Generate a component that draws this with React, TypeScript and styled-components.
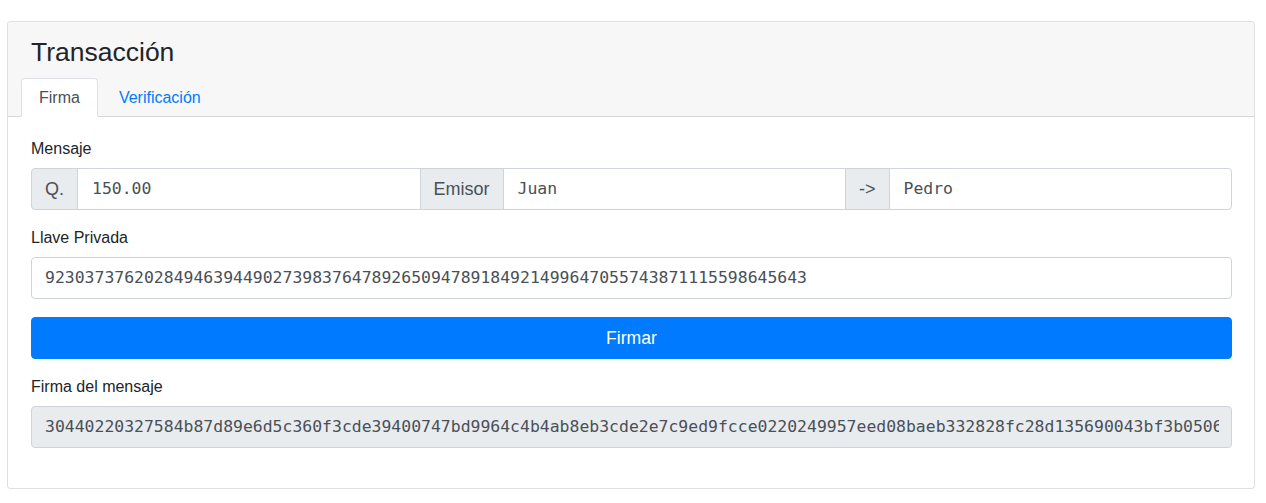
import React from "react";
import styled, { createGlobalStyle } from "styled-components";

const GlobalStyle = createGlobalStyle`
  html, body { margin: 0; padding: 0; background: #fff; }
  body { font-family: "Liberation Sans", Arial, sans-serif; color: #212529; font-size: 16px; line-height: 1.5; }
  * { box-sizing: border-box; }
`;

const Page = styled.div`
  padding: 21px 11px 0 7px;
`;

const Card = styled.div`
  width: 1248px;
  border: 1px solid rgba(0, 0, 0, 0.125);
  border-radius: 4px;
  background: #fff;
`;

const CardHeader = styled.div`
  background: #f7f7f7;
  border-bottom: 1px solid rgba(0, 0, 0, 0.125);
  border-radius: 3px 3px 0 0;
  padding: 13px 23px 0 23px;
`;

const Title = styled.h3`
  margin: 0 0 9px 0;
  font-size: 26.5px;
  line-height: 34px;
  font-weight: 400;
  color: #212529;
`;

const Tabs = styled.div`
  display: flex;
  gap: 3px;
  margin-left: -10px;
  margin-bottom: -1px;
`;

const Tab = styled.div<{ $active?: boolean }>`
  padding: 7px 17px 6px 17px;
  font-size: 16px;
  line-height: 24px;
  border: 1px solid ${(p) => (p.$active ? "#dee2e6" : "transparent")};
  border-bottom-color: ${(p) => (p.$active ? "#fff" : "transparent")};
  border-radius: 4px 4px 0 0;
  background: ${(p) => (p.$active ? "#fff" : "transparent")};
  color: ${(p) => (p.$active ? "#495057" : "#007bff")};
`;

const CardBody = styled.div`
  padding: 20px 22px 24px 23px;
  display: flex;
  flex-direction: column;
`;

const FormGroup = styled.div<{ $mb?: number }>`
  display: flex;
  flex-direction: column;
  margin-bottom: ${(p) => p.$mb ?? 16}px;
`;

const Label = styled.label`
  font-size: 16px;
  line-height: 24px;
  margin-bottom: 7px;
  color: #212529;
`;

const InputGroup = styled.div`
  display: flex;
  height: 42px;
`;

const Addon = styled.div<{ $first?: boolean }>`
  display: flex;
  align-items: center;
  padding: 0 13px;
  background: #e9ecef;
  border: 1px solid #ced4da;
  border-radius: ${(p) => (p.$first ? "4px 0 0 4px" : "0")};
  margin-left: ${(p) => (p.$first ? 0 : -1)}px;
  font-size: 18px;
  color: #495057;
  white-space: nowrap;
`;

const Field = styled.div<{ $last?: boolean; $readonly?: boolean; $pad?: number }>`
  flex: 1;
  min-width: 0;
  height: 42px;
  display: flex;
  align-items: center;
  padding: 0 12px 0 ${(p) => p.$pad ?? 13}px;
  margin-left: -1px;
  border: 1px solid #ced4da;
  border-radius: ${(p) => (p.$last ? "0 4px 4px 0" : "0")};
  background: ${(p) => (p.$readonly ? "#e9ecef" : "#fff")};
  font-family: "DejaVu Sans Mono", "Liberation Mono", monospace;
  font-size: 16.45px;
  color: #495057;
`;

const FieldText = styled.span`
  flex: 1;
  min-width: 0;
  white-space: nowrap;
  overflow: hidden;
`;

const FullField = styled(Field)`
  margin-left: 0;
  border-radius: 4px;
  flex: none;
  width: 100%;
`;

const Button = styled.button`
  height: 42px;
  width: 100%;
  margin: 2px 0 16px 0;
  border: 1px solid #007bff;
  border-radius: 4px;
  background: #007bff;
  color: #fff;
  font-family: "Liberation Sans", Arial, sans-serif;
  font-size: 17.6px;
  cursor: pointer;
`;

const signature =
  "30440220327584b87d89e6d5c360f3cde39400747bd9964c4b4ab8eb3cde2e7c9ed9fcce0220249957eed08baeb332828fc28d135690043bf3b05066e1a4c7d2b93f05e8a";

export default function App() {
  return (
    <>
      <GlobalStyle />
      <Page>
        <Card>
          <CardHeader>
            <Title>Transacción</Title>
            <Tabs>
              <Tab $active>Firma</Tab>
              <Tab>Verificación</Tab>
            </Tabs>
          </CardHeader>
          <CardBody>
            <FormGroup>
              <Label>Mensaje</Label>
              <InputGroup>
                <Addon $first>Q.</Addon>
                <Field $pad={14}><FieldText>150.00</FieldText></Field>
                <Addon>Emisor</Addon>
                <Field $pad={14}><FieldText>Juan</FieldText></Field>
                <Addon>-&gt;</Addon>
                <Field $pad={14} $last><FieldText>Pedro</FieldText></Field>
              </InputGroup>
            </FormGroup>
            <FormGroup>
              <Label>Llave Privada</Label>
              <FullField>
                <FieldText>92303737620284946394490273983764789265094789184921499647055743871115598645643</FieldText>
              </FullField>
            </FormGroup>
            <Button>Firmar</Button>
            <FormGroup>
              <Label>Firma del mensaje</Label>
              <FullField $readonly>
                <FieldText>{signature}</FieldText>
              </FullField>
            </FormGroup>
          </CardBody>
        </Card>
      </Page>
    </>
  );
}
